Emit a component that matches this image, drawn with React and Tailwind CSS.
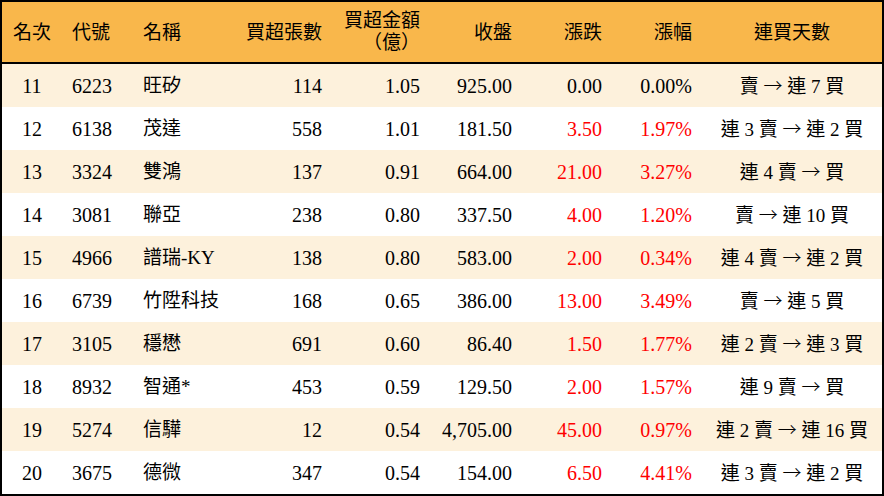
const rows = [
  ['11', '6223', '旺矽', '114', '1.05', '925.00', '0.00', '0.00%', '賣 → 連 7 買'],
  ['12', '6138', '茂達', '558', '1.01', '181.50', '3.50', '1.97%', '連 3 賣 → 連 2 買'],
  ['13', '3324', '雙鴻', '137', '0.91', '664.00', '21.00', '3.27%', '連 4 賣 → 買'],
  ['14', '3081', '聯亞', '238', '0.80', '337.50', '4.00', '1.20%', '賣 → 連 10 買'],
  ['15', '4966', '譜瑞-KY', '138', '0.80', '583.00', '2.00', '0.34%', '連 4 賣 → 連 2 買'],
  ['16', '6739', '竹陞科技', '168', '0.65', '386.00', '13.00', '3.49%', '賣 → 連 5 買'],
  ['17', '3105', '穩懋', '691', '0.60', '86.40', '1.50', '1.77%', '連 2 賣 → 連 3 買'],
  ['18', '8932', '智通*', '453', '0.59', '129.50', '2.00', '1.57%', '連 9 賣 → 買'],
  ['19', '5274', '信驊', '12', '0.54', '4,705.00', '45.00', '0.97%', '連 2 賣 → 連 16 買'],
  ['20', '3675', '德微', '347', '0.54', '154.00', '6.50', '4.41%', '連 3 賣 → 連 2 買'],
]

const cols = 'grid grid-cols-[60px_71px_100px_99px_98px_92px_90px_90px_180px]'

function isUp(v) {
  return parseFloat(v) > 0
}

// the arrow is full width in the original, so take it from the CJK font
function Streak({ text }) {
  const [before, after] = text.split(' → ')
  return (
    <>
      {before}{' '}
      <span style={{ fontFamily: '"Noto Sans CJK TC", sans-serif' }} className="font-light">→</span>
      {' '}{after}
    </>
  )
}

export default function App() {
  return (
    <div
      className="w-[884px] h-[496px] bg-white border-2 border-black text-black text-[20px] leading-none"
      style={{ fontFamily: '"Liberation Serif", "Noto Sans CJK TC", serif' }}
    >
      <div className={`${cols} h-[62px] bg-[#f9b74b] border-b-2 border-black items-center text-[19px]`}>
        <div className="text-center">名次</div>
        <div className="pl-[10px]">代號</div>
        <div className="pl-[10px]">名稱</div>
        <div className="text-right pr-[10px]">買超張數</div>
        <div className="text-right pr-[10px] leading-[22px]">
          <div>買超金額</div>
          <div>（億）</div>
        </div>
        <div className="text-right pr-[10px]">收盤</div>
        <div className="text-right pr-[10px]">漲跌</div>
        <div className="text-right pr-[10px]">漲幅</div>
        <div className="text-center">連買天數</div>
      </div>
      {rows.map((r, i) => {
        const red = isUp(r[6]) ? 'text-[#ff0000]' : ''
        return (
          <div
            key={r[0]}
            className={`${cols} h-[43px] items-center ${i % 2 === 0 ? 'bg-[#fdf1dc]' : 'bg-white'}`}
          >
            <div className="text-center">{r[0]}</div>
            <div className="pl-[10px]">{r[1]}</div>
            <div className="pl-[10px] text-[19px]">{r[2]}</div>
            <div className="text-right pr-[10px]">{r[3]}</div>
            <div className="text-right pr-[10px]">{r[4]}</div>
            <div className="text-right pr-[10px]">{r[5]}</div>
            <div className={`text-right pr-[10px] ${red}`}>{r[6]}</div>
            <div className={`text-right pr-[10px] ${red}`}>{r[7]}</div>
            <div className="text-center text-[19px]">
              <Streak text={r[8]} />
            </div>
          </div>
        )
      })}
    </div>
  )
}
